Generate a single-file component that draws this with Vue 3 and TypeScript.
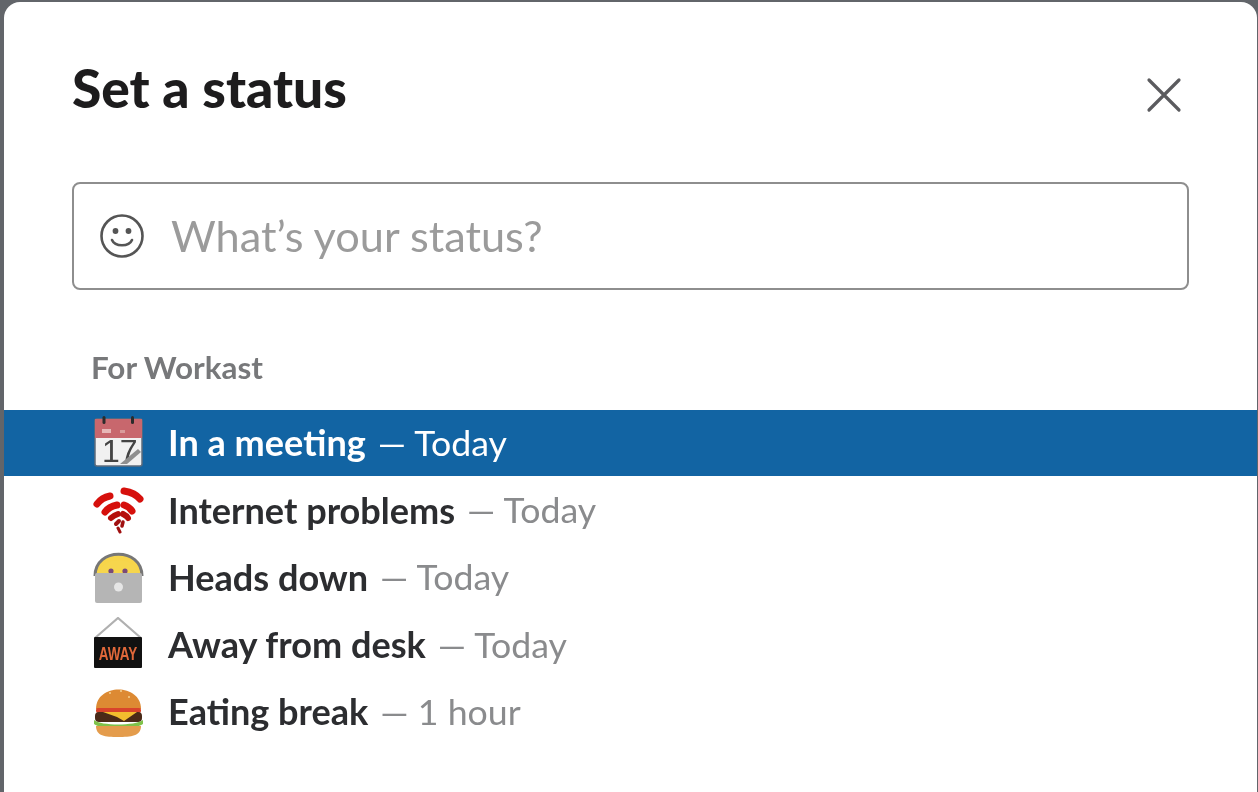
<script setup lang="ts">
interface StatusRow {
  id: string;
  label: string;
  until: string;
}
const rows: StatusRow[] = [
  { id: "meeting", label: "In a meeting", until: "Today" },
  { id: "wifi", label: "Internet problems", until: "Today" },
  { id: "heads", label: "Heads down", until: "Today" },
  { id: "away", label: "Away from desk", until: "Today" },
  { id: "burger", label: "Eating break", until: "1 hour" },
];
</script>

<template>
  <div class="page">
    <section class="modal">
      <header class="head">
        <h1 class="title">Set a status</h1>
        <svg class="close" viewBox="0 0 36 36" aria-label="Close">
          <path d="M3 3 L33 33 M33 3 L3 33" stroke="#5b5b5e" stroke-width="3.2" stroke-linecap="round" fill="none" />
        </svg>
      </header>
      <div class="field">
        <svg class="smile" viewBox="0 0 44 44">
          <circle cx="22" cy="22" r="20.5" fill="none" stroke="#555" stroke-width="2.6" />
          <circle cx="15.5" cy="17" r="2.9" fill="#555" />
          <circle cx="28.5" cy="17" r="2.9" fill="#555" />
          <path d="M12 26 C15 33 29 33 32 26" fill="none" stroke="#555" stroke-width="2.6" stroke-linecap="round" />
        </svg>
        <span class="placeholder">What’s your status?</span>
      </div>
      <div class="group">For Workast</div>
      <ul class="list">
        <li v-for="(r, i) in rows" :key="r.id" class="row" :class="{ active: i === 0 }">
          <svg class="emoji" viewBox="0 0 54 54">
            <template v-if="r.id === 'meeting'">
              <rect x="4" y="4" width="47" height="47" rx="2" fill="#f1f1f1" stroke="#5f6c7c" stroke-width="1.5" />
              <rect x="4" y="4" width="47" height="19" fill="#c8676d" />
              <rect x="11.5" y="1" width="3" height="8" rx="1.5" fill="#2b2b2b" />
              <rect x="40" y="1" width="3" height="8" rx="1.5" fill="#2b2b2b" />
              <rect x="11" y="14" width="9" height="4" fill="#e7b7b7" />
              <rect x="29" y="15" width="5" height="3" fill="#d99a9a" />
              <text x="11" y="47" class="cal">17</text>
              <path d="M29 49 L47 34 L50 37 L36 49 Z" fill="#8f8f8f" />
            </template>
            <template v-else-if="r.id === 'wifi'">
              <g fill="none" stroke="#d6100c" stroke-linecap="round">
                <path d="M6 21 C9 17 14 14 19 13" stroke-width="7" />
                <path d="M33 8 C39 9 45 11 49 16" stroke-width="7" />
                <path d="M14 29 C17 25 21 23 26 22" stroke-width="7" />
                <path d="M33 22 C36 23 39 25 41 28" stroke-width="7" />
                <path d="M20 35 C22 33 24 32 27 31" stroke-width="6" stroke="#b50f0c" />
                <path d="M32 31 C34 32 36 33 37 35" stroke-width="6" stroke="#b50f0c" />
                <path d="M25 41 L28 38" stroke-width="4" stroke="#a01010" />
                <path d="M32 39 L31 43" stroke-width="3.5" stroke="#a01010" />
                <path d="M27 45 L29 49" stroke-width="3" stroke="#a01010" />
              </g>
            </template>
            <template v-else-if="r.id === 'heads'">
              <path d="M4 26 C4 -3 51 -3 51 26" fill="#f7d54a" stroke="#777" stroke-width="3" />
              <path d="M9 23 C10 6 45 6 46 23 Z" fill="#f6d64d" />
              <circle cx="20" cy="21" r="2.6" fill="#7a4a78" />
              <circle cx="34" cy="21" r="2.6" fill="#7a4a78" />
              <rect x="4" y="23" width="47" height="30" rx="2" fill="#b5b5b5" />
              <circle cx="27.5" cy="37" r="4.5" fill="#e6e6e6" />
            </template>
            <template v-else-if="r.id === 'away'">
              <path d="M4 21 L27 1 L50 21" fill="none" stroke="#b0b0b0" stroke-width="2.2" />
              <rect x="3" y="20" width="48" height="31" rx="1" fill="#111" />
              <text x="27" y="32" class="away" text-anchor="middle" transform="scale(1 1.35)">AWAY</text>
            </template>
            <template v-else>
              <path d="M5 25 C5 -1 50 -1 50 25 Z" fill="#dd8a33" />
              <circle cx="19" cy="9" r="1" fill="#f3cf8f" />
              <circle cx="30" cy="7" r="1" fill="#f3cf8f" />
              <circle cx="38" cy="13" r="1" fill="#f3cf8f" />
              <rect x="5" y="24" width="45" height="5" rx="2" fill="#d9432b" />
              <rect x="4" y="28" width="47" height="10" rx="4" fill="#4a2a18" />
              <path d="M12 28 H46 L33 37 L26 33 Z" fill="#f3bd2e" />
              <path d="M3 36 C10 42 44 42 52 36 L52 40 C44 46 10 46 3 40 Z" fill="#7fc24a" />
              <path d="M5 42 H50 C50 52 40 53 27 53 C14 53 5 52 5 42 Z" fill="#e49c4c" />
            </template>
          </svg>
          <span class="label">{{ r.label }}</span>
          <span class="until">— {{ r.until }}</span>
        </li>
      </ul>
    </section>
  </div>
</template>

<style>
html, body { margin: 0; background: #62656a; }
</style>

<style scoped>
.page {
  width: 1258px;
  height: 792px;
  box-sizing: border-box;
  padding: 2px 1px 0 4px;
  overflow: hidden;
  background: #62656a;
  font-family: Lato, "Open Sans", sans-serif;
}
.modal {
  height: 830px;
  background: #fff;
  border-radius: 16px 16px 0 0;
  padding-top: 56px;
  box-sizing: border-box;
  filter: blur(0.5px);
}
.head {
  display: flex;
  align-items: center;
  justify-content: space-between;
  padding: 0 75px 0 68px;
  height: 60px;
}
.title {
  margin: 0 0 2px;
  font-size: 53.3px;
  line-height: 60px;
  font-weight: 900;
  color: #1d1c1d;
}
.close { width: 36px; height: 36px; margin-top: 14px; }
.field {
  margin: 64px 68px 0 68px;
  height: 108px;
  box-sizing: border-box;
  border: 2px solid #8e8e8e;
  border-radius: 8px;
  display: flex;
  align-items: center;
  padding-left: 26px;
  gap: 27px;
}
.smile { width: 44px; height: 44px; flex: none; }
.placeholder { font-size: 43.3px; line-height: 50px; margin-top: -2px; color: #9b9b9b; }
.group {
  margin: 58px 0 0 87px;
  font-size: 31.4px;
  line-height: 38px;
  font-weight: 700;
  color: #77787a;
}
.list { list-style: none; margin: 24px 0 0; padding: 0; }
.row {
  display: flex;
  align-items: center;
  height: 67.25px;
  padding-left: 87px;
  box-sizing: border-box;
  font-size: 35.7px;
  color: #2c2d30;
}
.row.active { background: #1264a3; color: #fff; height: 66px; padding-bottom: 2px; }
.emoji { width: 54px; height: 54px; flex: none; margin-right: 23px; filter: blur(0.4px); }
.label { font-weight: 700; font-size: 36.1px; margin-right: 12px; }
.until { color: #8a8b8d; font-weight: 400; }
.active .until { color: #fff; }
.cal { font: 400 32px "Liberation Sans", sans-serif; fill: #444; }
.away { font: 700 13.5px "Liberation Sans", sans-serif; fill: #e0683a; }
</style>
